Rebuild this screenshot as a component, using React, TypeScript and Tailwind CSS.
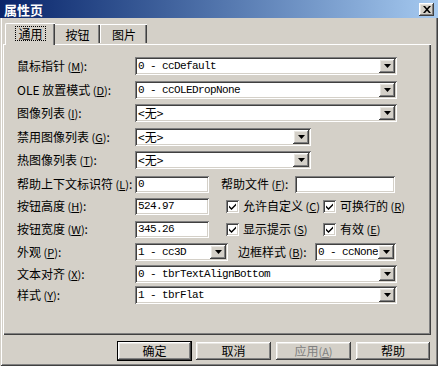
import React from "react";

const cjk = { fontFamily: "'Noto Sans CJK SC', 'Noto Sans', sans-serif" };
const mono = { fontFamily: "'Liberation Mono', 'Noto Sans CJK SC', monospace" };

const sunken =
  "shadow-[inset_1px_1px_#808080,inset_-1px_-1px_#ffffff,inset_2px_2px_#404040,inset_-2px_-2px_#d4d0c8]";
const raised =
  "shadow-[inset_-1px_-1px_#404040,inset_1px_1px_#ffffff,inset_-2px_-2px_#808080,inset_2px_2px_#e8e6e1]";

function Key({ k }: { k: string }) {
  return (
    <span className="text-[11px]">
      {" "}(<u>{k}</u>)
    </span>
  );
}

function Label({ text, k, className = "w-[118px]" }: { text: string; k: string; className?: string }) {
  return (
    <span className={`${className} shrink-0 text-[12px] leading-none text-black whitespace-nowrap`} style={cjk}>
      {text}
      <Key k={k} />:
    </span>
  );
}

function Combo({ value, className, cn }: { value: string; className: string; cn?: boolean }) {
  return (
    <div className={`${className} h-[18px] shrink-0 bg-white ${sunken} flex items-center p-[2px]`}>
      <span
        className={`flex-1 pl-[1px] whitespace-nowrap ${cn ? "text-[12px] leading-[14px]" : "text-[11px] leading-[14px] tracking-[-0.6px]"}`}
        style={cn ? cjk : mono}
      >
        {value}
      </span>
      <div className={`w-[16px] h-[14px] shrink-0 bg-[#d4d0c8] ${raised} flex items-center justify-center`}>
        <svg width="7" height="4" viewBox="0 0 7 4">
          <path d="M0 0h7L3.5 4z" fill="#000" />
        </svg>
      </div>
    </div>
  );
}

function Field({ value, className }: { value: string; className: string }) {
  return (
    <div className={`${className} h-[17px] shrink-0 bg-white ${sunken} flex items-center px-[3px]`}>
      <span className="text-[11px] tracking-[-0.6px] leading-none" style={mono}>
        {value}
      </span>
    </div>
  );
}

function Check({ text, k, className }: { text: string; k: string; className: string }) {
  return (
    <div className={`${className} flex items-center shrink-0`}>
      <div className={`w-[13px] h-[13px] bg-white ${sunken} flex items-center justify-center`}>
        <svg width="7" height="7" viewBox="0 0 7 7">
          <path d="M0 2.5l2.5 2.5L7 0.5V2.5L2.5 7L0 4.5z" fill="#000" />
        </svg>
      </div>
      <span className="ml-[4px] text-[12px] leading-none whitespace-nowrap" style={cjk}>
        {text}
        <Key k={k} />
      </span>
    </div>
  );
}

function Btn({ text, k, primary, disabled, className }: { text: string; k?: string; primary?: boolean; disabled?: boolean; className: string }) {
  return (
    <div
      className={`${className} h-[18px] bg-[#d4d0c8] flex items-center justify-center text-[12px] leading-none ${primary ? "outline outline-1 outline-black" : ""} ${raised} ${disabled ? "text-[#808080]" : "text-black"}`}
      style={cjk}
    >
      {text}
      {k && <Key k={k} />}
    </div>
  );
}

export default function App() {
  return (
    <div className="w-[438px] h-[366px] bg-[#d4d0c8] flex flex-col shadow-[inset_1px_1px_#d4d0c8,inset_-1px_-1px_#404040,inset_2px_2px_#ffffff,inset_-2px_-2px_#808080] overflow-hidden">
      {/* title bar */}
      <div className="h-[18px] bg-gradient-to-r from-[#0a246a] to-[#a6caf0] flex items-center justify-between pl-[4px] pr-[4px]">
        <span className="text-white text-[13px] font-bold leading-none" style={cjk}>属性页</span>
        <div className={`w-[15px] h-[13px] bg-[#d4d0c8] ${raised} flex items-center justify-center`}>
          <svg width="8" height="7" viewBox="0 0 8 7">
            <path d="M0 0h2l2 2.3L6 0h2L5 3.5 8 7H6L4 4.7 2 7H0l3-3.5z" fill="#000" />
          </svg>
        </div>
      </div>

      {/* tabs */}
      <div className="mt-[4px] h-[22px] flex items-end pl-[5px] relative z-10">
        <div className="w-[50px] h-[22px] -mb-px bg-[#d4d0c8] border-t border-l border-white shadow-[inset_-1px_0_#404040,inset_-2px_0_#808080] rounded-tl-[2px] flex items-start justify-center pt-[3px]">
          <span className="px-[2px] outline outline-1 outline-dotted outline-black text-[12px] leading-[13px]" style={cjk}>通用</span>
        </div>
        <div className="w-[45px] h-[19px] bg-[#d4d0c8] border-t border-white shadow-[inset_-1px_0_#404040,inset_-2px_0_#808080] flex items-start justify-center pt-[3px] mb-px">
          <span className="text-[12px] leading-[13px]" style={cjk}>按钮</span>
        </div>
        <div className="w-[47px] h-[19px] bg-[#d4d0c8] border-t border-l border-white shadow-[inset_-1px_0_#404040,inset_-2px_0_#808080] flex items-start justify-center pt-[3px] mb-px">
          <span className="text-[12px] leading-[13px]" style={cjk}>图片</span>
        </div>
      </div>

      {/* panel */}
      <div className="ml-[3px] w-[428px] h-[291px] border-t border-l border-white shadow-[inset_-1px_-1px_#404040,inset_-2px_-2px_#808080] pl-[13px] pt-[12px] flex flex-col">
        <div className="flex items-center h-[18px]">
          <Label text="鼠标指针" k="M" />
          <Combo value="0 - ccDefault" className="w-[262px]" />
        </div>
        <div className="flex items-center h-[18px] mt-[6px]">
          <Label text="OLE 放置模式" k="D" />
          <Combo value="0 - ccOLEDropNone" className="w-[262px]" />
        </div>
        <div className="flex items-center h-[18px] mt-[5px]">
          <Label text="图像列表" k="I" />
          <Combo value="<无>" cn className="w-[262px]" />
        </div>
        <div className="flex items-center h-[18px] mt-[6px]">
          <Label text="禁用图像列表" k="G" />
          <Combo value="<无>" cn className="w-[176px]" />
        </div>
        <div className="flex items-center h-[18px] mt-[5px]">
          <Label text="热图像列表" k="T" />
          <Combo value="<无>" cn className="w-[176px]" />
        </div>
        <div className="flex items-center h-[18px] mt-[6px]">
          <Label text="帮助上下文标识符" k="L" />
          <Field value="0" className="w-[74px]" />
          <Label text="帮助文件" k="F" className="ml-[12px] w-[74px]" />
          <Field value="" className="w-[100px]" />
        </div>
        <div className="flex items-center h-[18px] mt-[4px]">
          <Label text="按钮高度" k="H" />
          <Field value="524.97" className="w-[74px]" />
          <Check text="允许自定义" k="C" className="ml-[17px] w-[97px]" />
          <Check text="可换行的" k="R" className="" />
        </div>
        <div className="flex items-center h-[18px] mt-[5px]">
          <Label text="按钮宽度" k="W" />
          <Field value="345.26" className="w-[74px]" />
          <Check text="显示提示" k="S" className="ml-[17px] w-[97px]" />
          <Check text="有效" k="E" className="" />
        </div>
        <div className="flex items-center h-[18px] mt-[5px]">
          <Label text="外观" k="P" />
          <Combo value="1 - cc3D" className="w-[93px]" />
          <Label text="边框样式" k="B" className="ml-[10px] w-[77px]" />
          <Combo value="0 - ccNone" className="w-[81px]" />
        </div>
        <div className="flex items-center h-[18px] mt-[4px]">
          <Label text="文本对齐" k="X" />
          <Combo value="0 - tbrTextAlignBottom" className="w-[262px]" />
        </div>
        <div className="flex items-center h-[18px] mt-[3px]">
          <Label text="样式" k="Y" />
          <Combo value="1 - tbrFlat" className="w-[262px]" />
        </div>
      </div>

      {/* buttons */}
      <div className="mt-[7px] flex pl-[118px] gap-[5px]">
        <Btn text="确定" primary className="w-[73px]" />
        <Btn text="取消" className="w-[75px]" />
        <Btn text="应用" k="A" disabled className="w-[75px]" />
        <Btn text="帮助" className="w-[74px]" />
      </div>
    </div>
  );
}
